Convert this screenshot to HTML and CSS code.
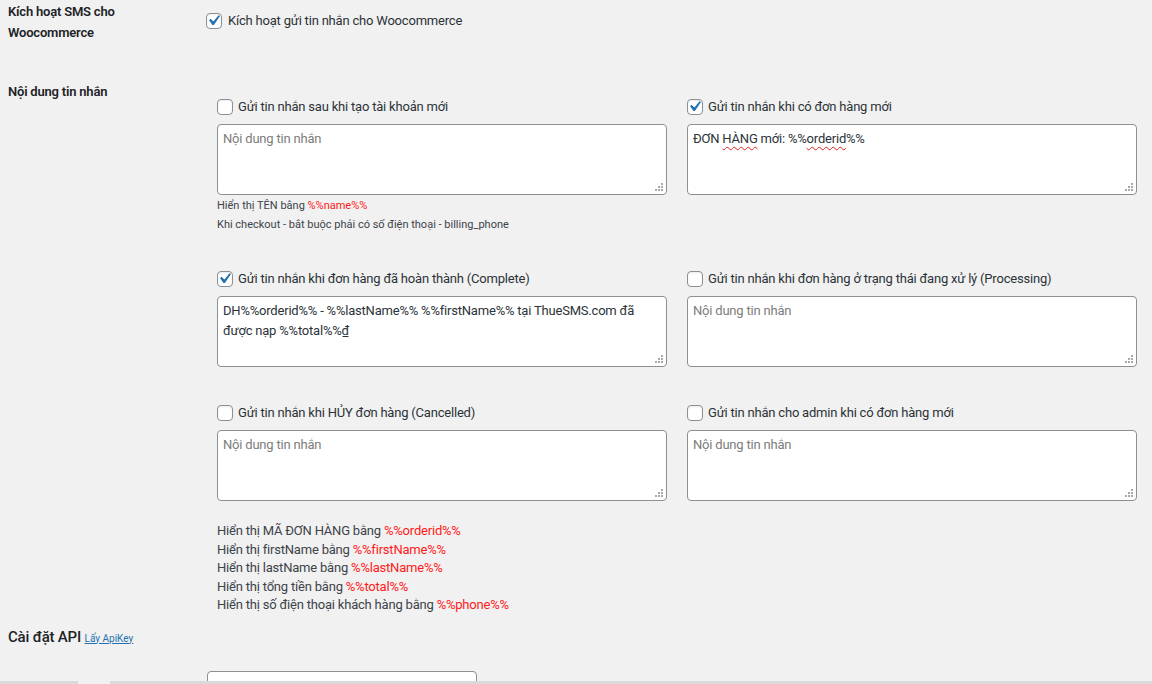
FILE: index.html
```html
<!DOCTYPE html>
<html lang="vi">
<head>
<meta charset="utf-8">
<title>Cài đặt SMS Woocommerce</title>
<link rel="stylesheet" href="styles.css">
</head>
<body>
<div class="page">
  <div class="row row-enable">
    <div class="th">Kích hoạt SMS cho Woocommerce</div>
    <div class="td td-enable">
      <label class="check">
        <span class="cb checked"><svg viewBox="0 0 20 20" width="21" height="21"><path d="M14.83 4.89l1.34.94-5.81 8.38H9.02L5.78 9.67l1.34-1.25 2.77 2.59z" fill="#2271b1"/></svg></span>
        <span>Kích hoạt gửi tin nhắn cho Woocommerce</span>
      </label>
    </div>
  </div>

  <div class="row row-msg">
    <div class="th">Nội dung tin nhắn</div>
    <div class="td">
      <div class="msg-grid">
        <div class="cell">
          <label class="check">
            <span class="cb"></span>
            <span>Gửi tin nhắn sau khi tạo tài khoản mới</span>
          </label>
          <div class="ta"><span class="ph">Nội dung tin nhắn</span><svg class="grip" viewBox="0 0 8 8" width="8" height="8"><path d="M6 0h2v2H6zM3 3h2v2H3zM6 3h2v2H6zM0 6h2v2H0zM3 6h2v2H3zM6 6h2v2H6z" fill="#a7aaad"/></svg></div>
          <div class="hint">
            <div>Hiển thị TÊN bằng <span class="var">%%name%%</span></div>
            <div>Khi checkout - bắt buộc phải có số điện thoại - billing_phone</div>
          </div>
        </div>
        <div class="cell">
          <label class="check">
            <span class="cb checked"><svg viewBox="0 0 20 20" width="21" height="21"><path d="M14.83 4.89l1.34.94-5.81 8.38H9.02L5.78 9.67l1.34-1.25 2.77 2.59z" fill="#2271b1"/></svg></span>
            <span>Gửi tin nhắn khi có đơn hàng mới</span>
          </label>
          <div class="ta">ĐƠN <span class="spell">HÀNG</span> mới: %%<span class="spell">orderid</span>%%<svg class="grip" viewBox="0 0 8 8" width="8" height="8"><path d="M6 0h2v2H6zM3 3h2v2H3zM6 3h2v2H6zM0 6h2v2H0zM3 6h2v2H3zM6 6h2v2H6z" fill="#a7aaad"/></svg></div>
        </div>
        <div class="cell">
          <label class="check">
            <span class="cb checked"><svg viewBox="0 0 20 20" width="21" height="21"><path d="M14.83 4.89l1.34.94-5.81 8.38H9.02L5.78 9.67l1.34-1.25 2.77 2.59z" fill="#2271b1"/></svg></span>
            <span>Gửi tin nhắn khi đơn hàng đã hoàn thành (Complete)</span>
          </label>
          <div class="ta">DH%%orderid%% - %%lastName%% %%firstName%% tại ThueSMS.com đã được nạp %%total%%₫<svg class="grip" viewBox="0 0 8 8" width="8" height="8"><path d="M6 0h2v2H6zM3 3h2v2H3zM6 3h2v2H6zM0 6h2v2H0zM3 6h2v2H3zM6 6h2v2H6z" fill="#a7aaad"/></svg></div>
        </div>
        <div class="cell">
          <label class="check">
            <span class="cb"></span>
            <span>Gửi tin nhắn khi đơn hàng ở trạng thái đang xử lý (Processing)</span>
          </label>
          <div class="ta"><span class="ph">Nội dung tin nhắn</span><svg class="grip" viewBox="0 0 8 8" width="8" height="8"><path d="M6 0h2v2H6zM3 3h2v2H3zM6 3h2v2H6zM0 6h2v2H0zM3 6h2v2H3zM6 6h2v2H6z" fill="#a7aaad"/></svg></div>
        </div>
        <div class="cell">
          <label class="check">
            <span class="cb"></span>
            <span>Gửi tin nhắn khi HỦY đơn hàng (Cancelled)</span>
          </label>
          <div class="ta"><span class="ph">Nội dung tin nhắn</span><svg class="grip" viewBox="0 0 8 8" width="8" height="8"><path d="M6 0h2v2H6zM3 3h2v2H3zM6 3h2v2H6zM0 6h2v2H0zM3 6h2v2H3zM6 6h2v2H6z" fill="#a7aaad"/></svg></div>
        </div>
        <div class="cell">
          <label class="check">
            <span class="cb"></span>
            <span>Gửi tin nhắn cho admin khi có đơn hàng mới</span>
          </label>
          <div class="ta"><span class="ph">Nội dung tin nhắn</span><svg class="grip" viewBox="0 0 8 8" width="8" height="8"><path d="M6 0h2v2H6zM3 3h2v2H3zM6 3h2v2H6zM0 6h2v2H0zM3 6h2v2H3zM6 6h2v2H6z" fill="#a7aaad"/></svg></div>
        </div>
      </div>
      <div class="vars">
        <div>Hiển thị MÃ ĐƠN HÀNG bằng <span class="var">%%orderid%%</span></div>
        <div>Hiển thị firstName bằng <span class="var">%%firstName%%</span></div>
        <div>Hiển thị lastName bằng <span class="var">%%lastName%%</span></div>
        <div>Hiển thị tổng tiền bằng <span class="var">%%total%%</span></div>
        <div>Hiển thị số điện thoại khách hàng bằng <span class="var">%%phone%%</span></div>
      </div>
    </div>
  </div>

  <h2 class="section">Cài đặt API <a href="#" class="apikey">Lấy ApiKey</a></h2>

  <div class="api-row">
    <div class="input"></div>
  </div>
</div>
<div class="hscroll"><div class="thumb"></div></div>
</body>
</html>
```

FILE: styles.css
```css
html, body {
  margin: 0;
  padding: 0;
}
body {
  background: #f1f1f1;
  font-family: Roboto, "Noto Sans", "DejaVu Sans", sans-serif;
  font-size: 13px;
  letter-spacing: -0.2px;
  color: #1d2327;
  overflow: hidden;
}
.page {
  padding: 0 16px 0 8px;
}
.row {
  display: flex;
}
.th {
  width: 198px;
  flex: none;
  box-sizing: border-box;
  padding: 1px 12px 0 0;
  font-weight: 600;
  line-height: 21px;
  color: #1d2327;
}
.td {
  flex: 1;
  min-width: 0;
}
.row-enable {
  margin-bottom: 37px;
}
.td-enable {
  padding-top: 11px;
}
.check {
  display: flex;
  align-items: center;
  gap: 6px;
  height: 20px;
  line-height: 20px;
  color: #2c3338;
}
.cb {
  position: relative;
  flex: none;
  width: 16px;
  height: 16px;
  box-sizing: border-box;
  border: 1px solid #8c8f94;
  border-radius: 4px;
  background: #fff;
  box-shadow: inset 0 1px 2px rgba(0,0,0,0.08);
}
.cb svg {
  position: absolute;
  left: -4px;
  top: -4px;
}
.msg-grid {
  display: grid;
  grid-template-columns: 450px 450px;
  column-gap: 20px;
  row-gap: 36px;
  padding: 17px 0 0 11px;
}
.cell .check {
  margin-bottom: 7px;
  gap: 5px;
}
.ta {
  position: relative;
  height: 71px;
  box-sizing: border-box;
  border: 1px solid #8c8f94;
  border-radius: 4px;
  background: #fff;
  padding: 4px 5px;
  line-height: 20px;
  color: #2c3338;
}
.ph {
  color: #7c7c7c;
}
.spell {
  text-decoration: underline wavy #e02020;
  text-decoration-thickness: 1px;
  text-underline-offset: 3px;
  text-decoration-skip-ink: none;
}
.grip {
  position: absolute;
  right: 3px;
  bottom: 3px;
}
.hint {
  margin: 1px 0 -1px;
  font-size: 11px;
  letter-spacing: 0;
  line-height: 19px;
  color: #3c434a;
}
.var {
  color: #ff1a1a;
}
.vars {
  margin-top: 21px;
  padding-left: 11px;
  line-height: 18.5px;
  color: #3c434a;
}
.section {
  margin: 11px 0 0;
  font-size: 15px;
  font-weight: 500;
  line-height: 22px;
  color: #1d2327;
}
.apikey {
  font-size: 10px;
  font-weight: 400;
  letter-spacing: 0;
  color: #2271b1;
  text-decoration: underline;
}
.api-row {
  padding: 21px 0 0 199px;
}
.input {
  width: 270px;
  height: 30px;
  box-sizing: border-box;
  border: 1px solid #8c8f94;
  border-radius: 4px;
  background: #fff;
}
.hscroll {
  position: fixed;
  left: 0;
  right: 0;
  bottom: 0;
  height: 3px;
  background: #dadada;
}
.thumb {
  margin-left: 78px;
  width: 32px;
  height: 3px;
  background: #f0f0f0;
}
```
